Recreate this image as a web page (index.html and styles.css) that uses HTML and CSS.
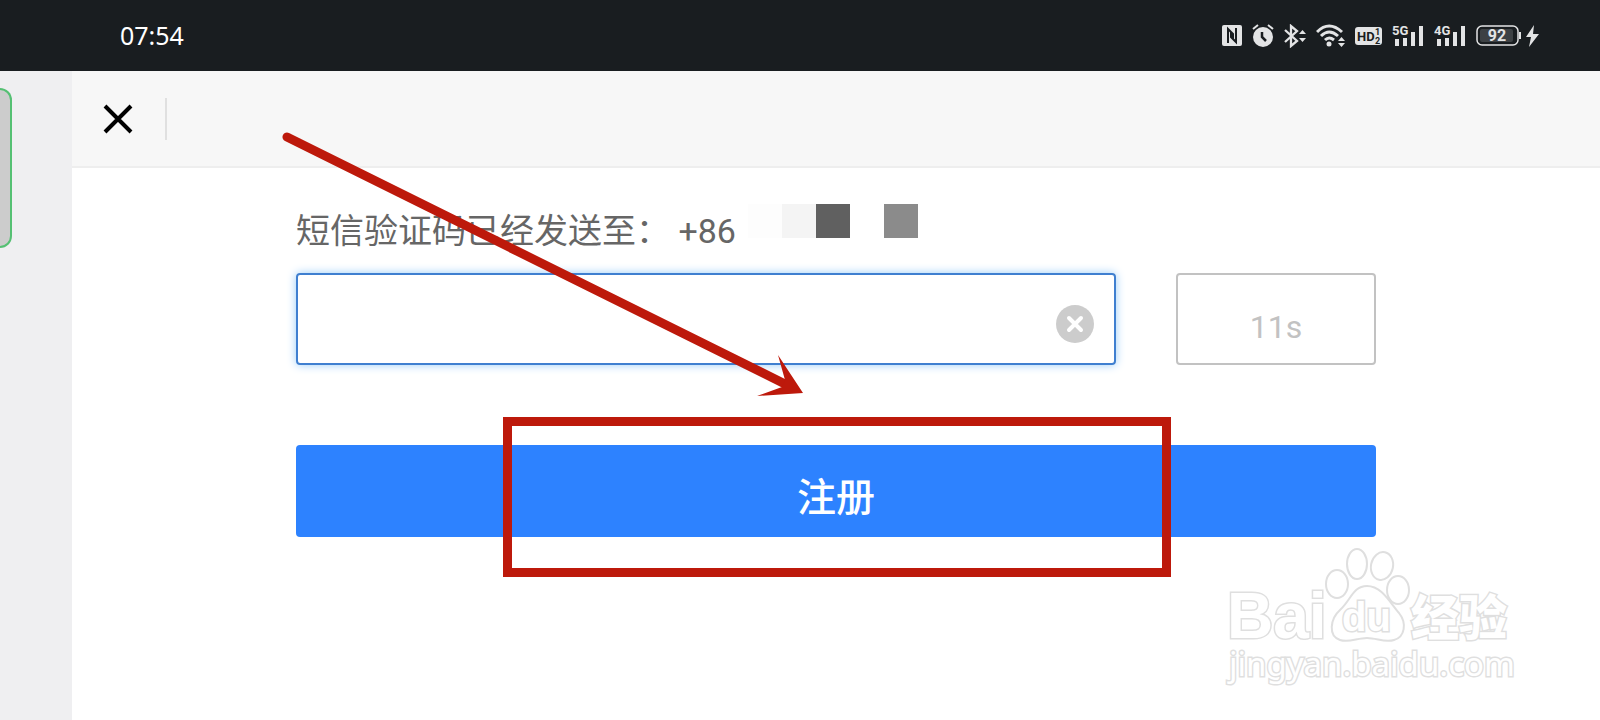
FILE: index.html
```html
<!DOCTYPE html>
<html lang="zh-CN">
<head>
  <meta charset="UTF-8" />
  <meta name="viewport" content="width=device-width, initial-scale=1.0" />
  <title>注册</title>
  <link rel="stylesheet" href="styles.css">
</head>
<body>
  <header class="status-bar">
    <span class="time">07:54</span>
    <div class="status-icons">
      <!-- nfc -->
      <svg width="20" height="22" viewBox="0 0 20 22">
        <rect width="20" height="21" rx="2" fill="#e3e4e5"/>
        <path d="M6 18V4l5 5v5M14 3v14l-5-5V7" fill="none" stroke="#191d20" stroke-width="2"/>
      </svg>
      <!-- alarm -->
      <svg width="22" height="24" viewBox="0 0 22 24">
        <circle cx="11" cy="13" r="10" fill="#e3e4e5"/>
        <path d="M1 5l5-4M21 5l-5-4" stroke="#e3e4e5" stroke-width="2"/>
        <path d="M10 8v5l4 4" fill="none" stroke="#191d20" stroke-width="2.5"/>
      </svg>
      <!-- bluetooth -->
      <svg width="22" height="24" viewBox="0 0 22 24">
        <path d="M1 6l12 11-6 5V2l6 5L1 18" fill="none" stroke="#e3e4e5" stroke-width="2.3"/>
        <path d="M15 10l3.5-4 3.5 4zM15 14l3.5 4 3.5-4z" fill="#e3e4e5"/>
      </svg>
      <!-- wifi -->
      <svg width="29" height="24" viewBox="0 0 29 24">
        <path d="M1 8q12-12 25 0M5 12q8-8 17 0M9 16q4-4 9 0" fill="none" stroke="#e3e4e5" stroke-width="3"/>
        <circle cx="13" cy="20" r="2.5" fill="#e3e4e5"/>
        <path d="M22 17l3.5-4 3.5 4zM22 19l3.500 4 3.5-4z" fill="#e3e4e5"/>
      </svg>
      <!-- hd -->
      <svg width="27" height="24" viewBox="0 0 27 24">
        <rect y="3" width="27" height="18" rx="3" fill="#e3e4e5"/>
        <text class="icon-text dark" x="2" y="17" font-size="13">HD</text>
        <text class="icon-text dark" x="20" y="11" font-size="9">1</text>
        <text class="icon-text dark" x="20" y="20" font-size="9">2</text>
      </svg>
      <svg class="signal" width="32" height="24" viewBox="0 0 32 24">
        <path d="M3 15h4v7H3zM11 14h4v8h-4zM19 8h4v14h-4zM27 2h4v20h-4z" fill="#e3e4e5"/>
        <text class="icon-text" x="0" y="11" font-size="13">5G</text>
      </svg>
      <svg class="signal" width="32" height="24" viewBox="0 0 32 24">
        <path d="M3 15h4v7H3zM11 14h4v8h-4zM19 8h4v14h-4zM27 2h4v20h-4z" fill="#e3e4e5"/>
        <text class="icon-text" x="0" y="11" font-size="13">4G</text>
      </svg>
      <!-- battery + charging -->
      <svg width="64" height="24" viewBox="0 0 64 24">
        <rect x="1" y="2" width="41" height="19" rx="5" fill="none" stroke="#e3e4e5" stroke-width="1.5"/>
        <rect x="4" y="5" width="33" height="13" rx="2" fill="#3d4144"/>
        <path d="M44 8v7" stroke="#e3e4e5" stroke-width="2"/>
        <text class="icon-text" x="21" y="17" font-size="16" text-anchor="middle">92</text>
        <path d="M58 1L50 13h5l-2 10 10-13h-6z" fill="#e3e4e5"/>
      </svg>
    </div>
  </header>

  <div class="page">
    <aside class="side"><div class="side-card"></div></aside>
    <main class="main">
      <div class="toolbar">
        <button class="close" type="button" aria-label="关闭">
          <svg width="30" height="30" viewBox="0 0 30 30"><path d="M2 2l26 26M28 2L2 28" stroke="#000" stroke-width="4"/></svg>
        </button>
        <span class="divider"></span>
      </div>

      <form class="sms-form">
        <div class="sent-row">
          <label for="code">短信验证码已经发送至： +86</label>
          <span class="mosaic"><i class="m1"></i><i class="m2"></i><i class="m3"></i><i></i><i class="m4"></i></span>
        </div>
        <div class="code-row">
          <div class="code-box">
            <input type="text" id="code">
            <button class="clear" type="button" aria-label="清除">
              <svg width="38" height="38" viewBox="0 0 38 38">
                <circle cx="19" cy="19" r="19" fill="#ccc"/>
                <path d="M13 13l12 12M25 13L13 25" stroke="#fff" stroke-width="4" stroke-linecap="round"/>
              </svg>
            </button>
          </div>
          <button class="countdown" type="button">11s</button>
        </div>
        <button class="register" type="submit">注册</button>

        <!-- arrow and frame pointing at the button -->
        <svg class="arrow" width="530" height="270" viewBox="0 0 530 270">
          <path d="M10 10L506 256" stroke="#bd190b" stroke-width="9" stroke-linecap="round"/>
          <path d="M526 266L501 228l7 25-3 7-25 9z" fill="#bd190b"/>
        </svg>
        <div class="frame"></div>
      </form>

      <svg class="watermark" width="300" height="150" viewBox="0 0 300 150">
        <g class="outline">
          <text class="wm-latin" x="7" y="93" font-size="64">Bai</text>
          <ellipse cx="117" cy="39" rx="11" ry="14"/>
          <ellipse cx="137" cy="19" rx="10" ry="15"/>
          <ellipse cx="162" cy="21" rx="11" ry="14" transform="rotate(12 162 21)"/>
          <ellipse cx="178" cy="45" rx="11" ry="14"/>
          <path d="M147 41c-14 0-16 14-27 24-10 9-12 26 0 30 9 3 17-2 27-2s18 5 27 2c11-3 13-17 5-27-9-10-17-27-32-27z"/>
          <text class="wm-du" x="122" y="86" font-size="40">du</text>
          <text class="wm-cjk" x="191" y="90" font-size="48">经验</text>
          <text class="wm-url" x="9" y="131" font-size="33">jingyan.baidu.com</text>
        </g>
      </svg>
    </main>
  </div>
</body>
</html>
```
FILE: styles.css
```css
* {
  box-sizing: border-box;
}
body {
  margin: 0;
  min-height: 100vh;
  display: flex;
  flex-direction: column;
  font-family: Roboto, "Noto Sans CJK SC", sans-serif;
  background: #fff;
}
button {
  padding: 0;
  border: 0;
  background: none;
  font-family: inherit;
  cursor: pointer;
}
svg {
  display: block;
}

/* status bar */
.status-bar {
  height: 71px;
  padding: 0 60px 0 120px;
  display: flex;
  align-items: center;
  justify-content: space-between;
  background: #191d20;
}
.time {
  color: #fff;
  font-family: "Noto Sans", sans-serif;
  font-size: 25px;
  line-height: 32px;
  padding-bottom: 2px;
}
.status-icons {
  display: flex;
  align-items: center;
  gap: 10px;
}
.icon-text {
  fill: #e3e4e5;
  font-family: Roboto, sans-serif;
  font-weight: bold;
}
.icon-text.dark {
  fill: #191d20;
}
.signal .icon-text {
  stroke: #191d20;
  stroke-width: 2px;
  paint-order: stroke;
}

.page {
  flex: 1;
  display: flex;
}
.side {
  width: 72px;
  padding-top: 17px;
  background: #efeff1;
}
.side-card {
  width: 12px;
  height: 160px;
  background: #ccc;
  border: 2px solid #55c073;
  border-left: 0;
  border-radius: 0 12px 12px 0;
}
.main {
  flex: 1;
  position: relative;
}
.toolbar {
  height: 97px;
  padding: 0 31px;
  display: flex;
  align-items: center;
  gap: 32px;
  background: #f7f7f7;
  border-bottom: 2px solid #eee;
}
.divider {
  width: 2px;
  height: 42px;
  background: #e0e0e0;
}

/* form */
.sms-form {
  position: relative;
  max-width: 1080px;
  margin: 0 auto;
  padding-top: 36px;
}
.sent-row {
  height: 69px;
  display: flex;
  gap: 12px;
  color: #666;
  font-size: 34px;
  line-height: 54px;
}
.mosaic {
  display: flex;
}
.mosaic i {
  width: 34px;
  height: 34px;
}
.mosaic .m1 {
  background: #fdfdfd;
}
.mosaic .m2 {
  background: #f4f4f4;
}
.mosaic .m3 {
  background: #606060;
}
.mosaic .m4 {
  background: #8b8b8b;
}
.code-row {
  display: flex;
  gap: 60px;
}
.code-box {
  flex: 1;
  height: 92px;
  padding: 0 20px;
  display: flex;
  align-items: center;
  border: 2px solid #3f7fd0;
  border-radius: 4px;
  box-shadow: 0 0 10px #9accf8;
}
.code-box input {
  flex: 1;
  border: 0;
  outline: none;
  font-size: 34px;
}
.clear {
  padding-top: 10px;
}
.countdown {
  width: 200px;
  height: 92px;
  padding-top: 16px;
  border: 2px solid #c2c2c2;
  border-radius: 4px;
  color: #c2c2c2;
  font-size: 32px;
}
.register {
  width: 100%;
  height: 92px;
  margin-top: 80px;
  padding-top: 6px;
  border-radius: 4px;
  background: #2d82ff;
  color: #fff;
  font-size: 39px;
  font-weight: 500;
}

.arrow {
  position: absolute;
  left: -19px;
  top: -41px;
  pointer-events: none;
}
.frame {
  position: absolute;
  left: 207px;
  right: 205px;
  top: 249px;
  height: 160px;
  border: 9px solid #bd190b;
  pointer-events: none;
}

/* watermark */
.watermark {
  position: absolute;
  right: 80px;
  bottom: 25px;
}
.outline {
  fill: #fff;
  stroke: #dfdfdf;
  stroke-width: 2px;
}
.outline text {
  paint-order: stroke;
  stroke-width: 3px;
}
.wm-latin,
.wm-du {
  font-family: "Liberation Sans", sans-serif;
  font-weight: bold;
}
.wm-cjk {
  font-family: "Noto Sans CJK SC", sans-serif;
  font-weight: 900;
}
.wm-url {
  font-family: "Noto Sans", sans-serif;
}
```
